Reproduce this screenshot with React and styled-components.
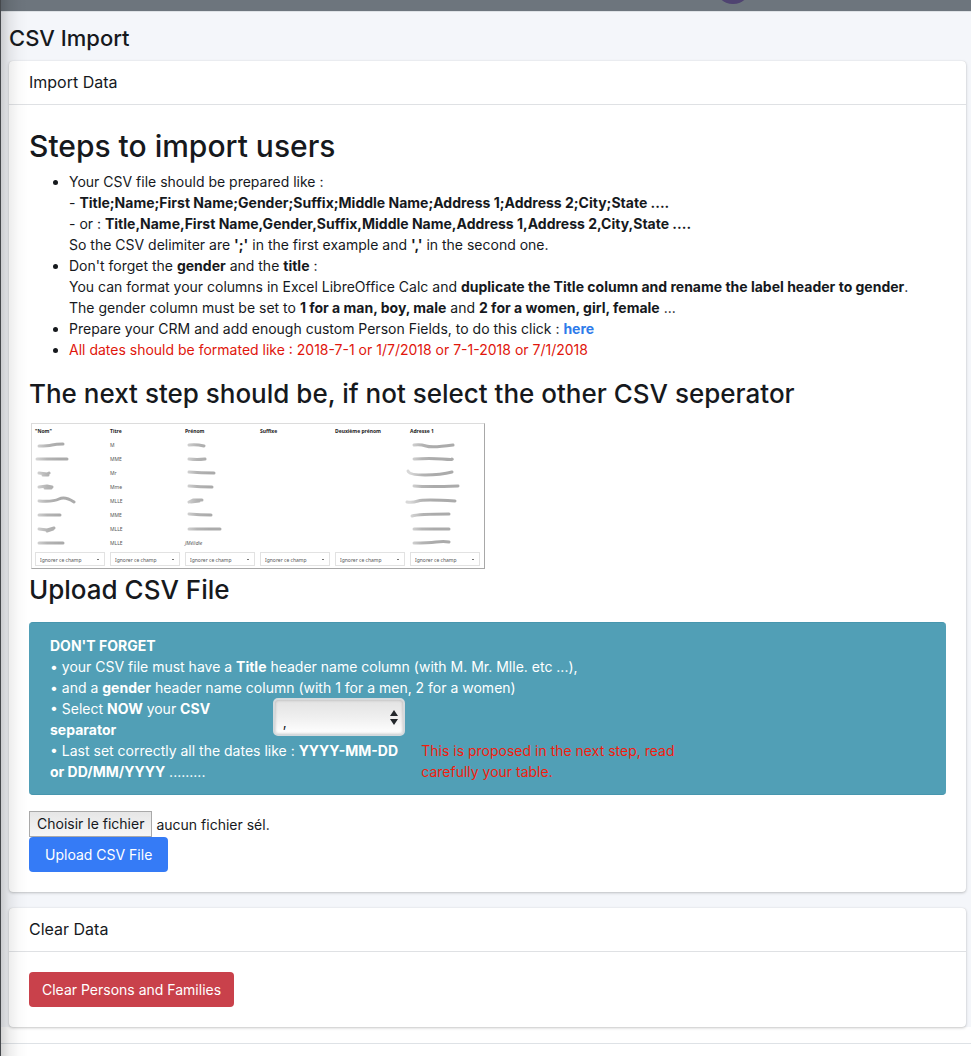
import React from "react";
import styled, { createGlobalStyle, css } from "styled-components";

const GlobalStyle = createGlobalStyle`
  *, *::before, *::after { box-sizing: border-box; }
  body {
    margin: 0;
    background: #ffffff;
    color: #16191d;
    font: 400 14px/21px Inter, "Liberation Sans", sans-serif;
  }
  h1, h2, h3, p, ul, figure { margin: 0; }
  strong { font-weight: 700; }
`;

const Page = styled.div`
  position: relative;
  min-height: 100vh;
  overflow: hidden;
`;

const EdgeShade = styled.div`
  position: absolute;
  z-index: 5;
  inset: 0 auto 0 0;
  width: 28px;
  pointer-events: none;
  border-left: 1px solid #45484c;
  background: linear-gradient(to right, rgba(0, 0, 0, 0.17), rgba(0, 0, 0, 0.07) 30%, rgba(0, 0, 0, 0.02) 65%, transparent);
`;

const TopBar = styled.header`
  height: 12px;
  background: #6d757d;
  border-bottom: 1px solid #dee2e6;
`;

const Avatar = styled.span`
  position: absolute;
  top: -32px;
  left: 75%;
  width: 36px;
  height: 36px;
  margin-left: -13px;
  border-radius: 50%;
  background: #4f4371;
`;

const Content = styled.main`
  background: #f4f6fa;
  padding: 10px 5px 0 9px;
`;

const PageTitle = styled.h1`
  font-size: 22px;
  line-height: 32px;
  font-weight: 500;
  margin-bottom: 7px;
`;

const Card = styled.section`
  background: #ffffff;
  border-radius: 4px;
  box-shadow: 0 0 1px rgba(0, 0, 0, 0.15), 0 1px 3px rgba(0, 0, 0, 0.22);
  & + & { margin-top: 16px; }
`;

const CardTitle = styled.h2`
  font-size: 16px;
  line-height: 22px;
  font-weight: 400;
  padding: 10px 20px 11px;
  border-bottom: 1px solid #dfe1e4;
`;

const CardBody = styled.div`
  padding: 20px;
`;

const Heading = styled.h3`
  font-weight: 500;
  font-size: ${(p) => (p.$large ? "30px" : "26px")};
  line-height: ${(p) => (p.$large ? "42px" : "34px")};
`;

const Steps = styled.ul`
  padding-left: 40px;
  margin: 4px 0 17px;
`;

const Step = styled.li`
  color: ${(p) => (p.$warn ? "#e0160c" : "inherit")};
  &::marker { color: #16191d; }
`;

const Link = styled.a`
  color: #2f7bea;
  font-weight: 700;
  text-decoration: none;
`;

const Preview = styled.figure`
  width: 454px;
  margin: 12px 0 4px 2px;
  padding: 0 0 2px 3px;
  border: 1px solid #dcdcdc;
  border-right-color: #a8a8a8;
  border-bottom-color: #a8a8a8;
`;

const PreviewTable = styled.table`
  width: 450px;
  table-layout: fixed;
  border-collapse: collapse;
  font: 400 5px/14px "Noto Sans", sans-serif;
  color: #555555;
  th, td { height: 14px; padding: 0; text-align: left; line-height: 14px; }
  th { color: #222222; font-weight: 700; }
  tfoot td { padding-top: 2px; height: 16px; }
  svg { display: block; overflow: visible; }
`;

const FieldSelect = styled.select`
  display: block;
  appearance: none;
  width: 70px;
  height: 14px;
  padding: 0 4px;
  border: 1px solid #e2e2e2;
  border-radius: 0;
  color: #555555;
  font: inherit;
  background: linear-gradient(#777777, #777777) right 5px center / 2px 1px no-repeat #ffffff;
`;

const Alert = styled.div`
  margin: 15px 0 16px;
  padding: 12px 21px;
  border-radius: 4px;
  background: #519fb6;
  border: 1px solid #4796ae;
  border-width: 1px 0;
  color: #ffffff;
`;

const AlertRow = styled.div`
  display: grid;
  grid-template-columns: repeat(12, minmax(0, 1fr));
  margin: 0 -8px;
`;

const AlertCell = styled.div`
  grid-column: span ${(p) => p.$span};
  padding: 0 8px;
  color: ${(p) => (p.$warn ? "#f21d0d" : "inherit")};
`;

const SeparatorLabel = styled.label`
  display: block;
`;

const SelectShell = styled.div`
  position: relative;
  svg {
    position: absolute;
    right: 7px;
    top: 12px;
    pointer-events: none;
  }
`;

const SeparatorSelect = styled.select`
  display: block;
  appearance: none;
  width: 100%;
  height: 38px;
  padding: 8px 24px 0 8px;
  border: 2px solid #d5dadd;
  border-radius: 5px;
  background: linear-gradient(#e2e2e2, #efefef 50%, #ffffff);
  box-shadow: inset 0 0 3px rgba(0, 0, 0, 0.25);
  color: #16191d;
  font: inherit;
`;

const FileRow = styled.div`
  display: flex;
  align-items: center;
  gap: 4px;
  input { display: none; }
`;

const FileButton = styled.label`
  height: 26px;
  padding: 0 7px;
  border: 1px solid #a9a9a9;
  background: linear-gradient(#e6e6e6, #f6f6f6);
  line-height: 24px;
`;

const tones = {
  primary: css`background: #357bf6; padding: 0 16px;`,
  danger: css`background: #c9414b; padding: 0 13px;`,
};

const Button = styled.button`
  display: block;
  height: 35px;
  border: 0;
  border-radius: 4px;
  color: #ffffff;
  font: inherit;
  ${(p) => tones[p.$tone]}
`;

const Footer = styled.footer`
  margin-top: 16px;
  border-top: 1px solid #dee2e6;
  height: 12px;
`;

const columns = ['"Nom"', "Titre", "Prénom", "Suffixe", "Deuxième prénom", "Adresse 1"];

/* Brush strokes hiding the personal data of each sample row. */
const rows = [
  { title: "M", name: "M4 8Q13 8 17 7T28 6", first: "M4 7Q11 6 19 8", address: "M4 7Q10 6 16 8T43 7" },
  { title: "MME", name: "M2 7Q15 7 32 7", first: "M4 7Q12 8 20 7", address: "M4 7Q20 6 32 7T42 7" },
  { title: "Mr", name: "M4 7L12 8L14 7M8 9L13 9", first: "M4 6Q16 7 29 7", address: "M-2 5Q-1 9 15 9T42 6" },
  { title: "Mme", name: "M4 7L12 6L17 7M10 8H16", first: "M4 6Q16 7 27 7", address: "M4 6Q18 7 48 6" },
  { title: "MLLE", name: "M4 7Q18 8 24 5T39 8", first: "M4 8L8 6L17 6M6 8L14 7", address: "M-3 8Q2 9 8 7T45 7" },
  { title: "MME", name: "M4 7Q16 7 25 7", first: "M4 6Q15 7 26 7", address: "M2 8Q8 6 39 6" },
  { title: "MLLE", name: "M4 7L12 8L19 6M12 9L18 7", first: "M4 7Q18 7 35 7", address: "M4 7Q20 7 39 7" },
  { title: "MLLE", name: "M4 7Q13 7 28 7", firstText: "JMélidie", address: "M4 7Q18 7 26 6T39 6" },
];

const Brush = styled.path`
  fill: none;
  stroke: url(#brush);
  stroke-width: 3px;
  stroke-linecap: round;
  stroke-linejoin: round;
  filter: blur(0.5px);
`;

function BrushTone() {
  return (
    <defs>
      <linearGradient id="brush" gradientUnits="userSpaceOnUse" x1="0" y1="0" x2="24" y2="0">
        <stop offset="0" stopColor="#d8d8d8" />
        <stop offset="0.5" stopColor="#b4b4b4" />
        <stop offset="1" stopColor="#ababab" />
      </linearGradient>
    </defs>
  );
}

function Scribble({ d }) {
  return (
    <svg width="70" height="14" aria-hidden="true">
      <BrushTone />
      <Brush d={d} />
    </svg>
  );
}

function ImportPreview() {
  return (
    <Preview>
      <PreviewTable>
        <thead>
          <tr>{columns.map((c) => <th key={c} scope="col">{c}</th>)}</tr>
        </thead>
        <tbody>
          {rows.map((r, i) => (
            <tr key={i}>
              <td><Scribble d={r.name} /></td>
              <td>{r.title}</td>
              <td>{r.firstText ? <em>{r.firstText}</em> : <Scribble d={r.first} />}</td>
              <td />
              <td />
              <td><Scribble d={r.address} /></td>
            </tr>
          ))}
        </tbody>
        <tfoot>
          <tr>
            {columns.map((c) => (
              <td key={c}>
                <FieldSelect aria-label={c}><option>Ignorer ce champ</option></FieldSelect>
              </td>
            ))}
          </tr>
        </tfoot>
      </PreviewTable>
    </Preview>
  );
}

function UploadForm() {
  return (
    <form onSubmit={(e) => e.preventDefault()}>
      <Alert>
        <strong>DON'T FORGET</strong>
        <p>• your CSV file must have a <strong>Title</strong> header name column (with M. Mr. Mlle. etc ...),</p>
        <p>• and a <strong>gender</strong> header name column (with 1 for a men, 2 for a women)</p>
        <AlertRow>
          <AlertCell $span={3}>
            <SeparatorLabel htmlFor="separator">
              • Select <strong>NOW</strong> your <strong>CSV separator</strong>
            </SeparatorLabel>
          </AlertCell>
          <AlertCell $span={2}>
            <SelectShell>
              <SeparatorSelect id="separator" defaultValue=",">
                <option>,</option>
                <option>;</option>
              </SeparatorSelect>
              <svg width="8" height="15" fill="#24282c" aria-hidden="true">
                <path d="M4 0L8 6H0ZM0 9H8L4 15Z" />
              </svg>
            </SelectShell>
          </AlertCell>
        </AlertRow>
        <AlertRow>
          <AlertCell $span={5}>
            • Last set correctly all the dates like : <strong>YYYY-MM-DD or DD/MM/YYYY</strong> .........
          </AlertCell>
          <AlertCell $span={4} $warn>This is proposed in the next step, read carefully your table.</AlertCell>
        </AlertRow>
      </Alert>
      <FileRow>
        <FileButton htmlFor="csv-file">Choisir le fichier</FileButton>
        <input id="csv-file" type="file" accept=".csv" />
        <span>aucun fichier sél.</span>
      </FileRow>
      <Button $tone="primary" type="submit">Upload CSV File</Button>
    </form>
  );
}

export default function App() {
  return (
    <Page>
      <GlobalStyle />
      <EdgeShade />
      <TopBar><Avatar /></TopBar>
      <Content>
        <PageTitle>CSV Import</PageTitle>
        <Card>
          <CardTitle>Import Data</CardTitle>
          <CardBody>
            <Heading $large>Steps to import users</Heading>
            <Steps>
              <Step>
                Your CSV file should be prepared like :<br />
                - <strong>Title;Name;First Name;Gender;Suffix;Middle Name;Address 1;Address 2;City;State ....</strong><br />
                - or : <strong>Title,Name,First Name,Gender,Suffix,Middle Name,Address 1,Address 2,City,State ....</strong><br />
                So the CSV delimiter are <strong>';'</strong> in the first example and <strong>','</strong> in the second one.
              </Step>
              <Step>
                Don't forget the <strong>gender</strong> and the <strong>title</strong> :<br />
                You can format your columns in Excel LibreOffice Calc and <strong>duplicate the Title column and rename the label header to gender</strong>.<br />
                The gender column must be set to <strong>1 for a man, boy, male</strong> and <strong>2 for a women, girl, female</strong> ...
              </Step>
              <Step>Prepare your CRM and add enough custom Person Fields, to do this click : <Link href="#fields">here</Link></Step>
              <Step $warn>All dates should be formated like : 2018-7-1 or 1/7/2018 or 7-1-2018 or 7/1/2018</Step>
            </Steps>
            <Heading>The next step should be, if not select the other CSV seperator</Heading>
            <ImportPreview />
            <Heading>Upload CSV File</Heading>
            <UploadForm />
          </CardBody>
        </Card>
        <Card>
          <CardTitle>Clear Data</CardTitle>
          <CardBody>
            <Button $tone="danger" type="button">Clear Persons and Families</Button>
          </CardBody>
        </Card>
      </Content>
      <Footer />
    </Page>
  );
}
